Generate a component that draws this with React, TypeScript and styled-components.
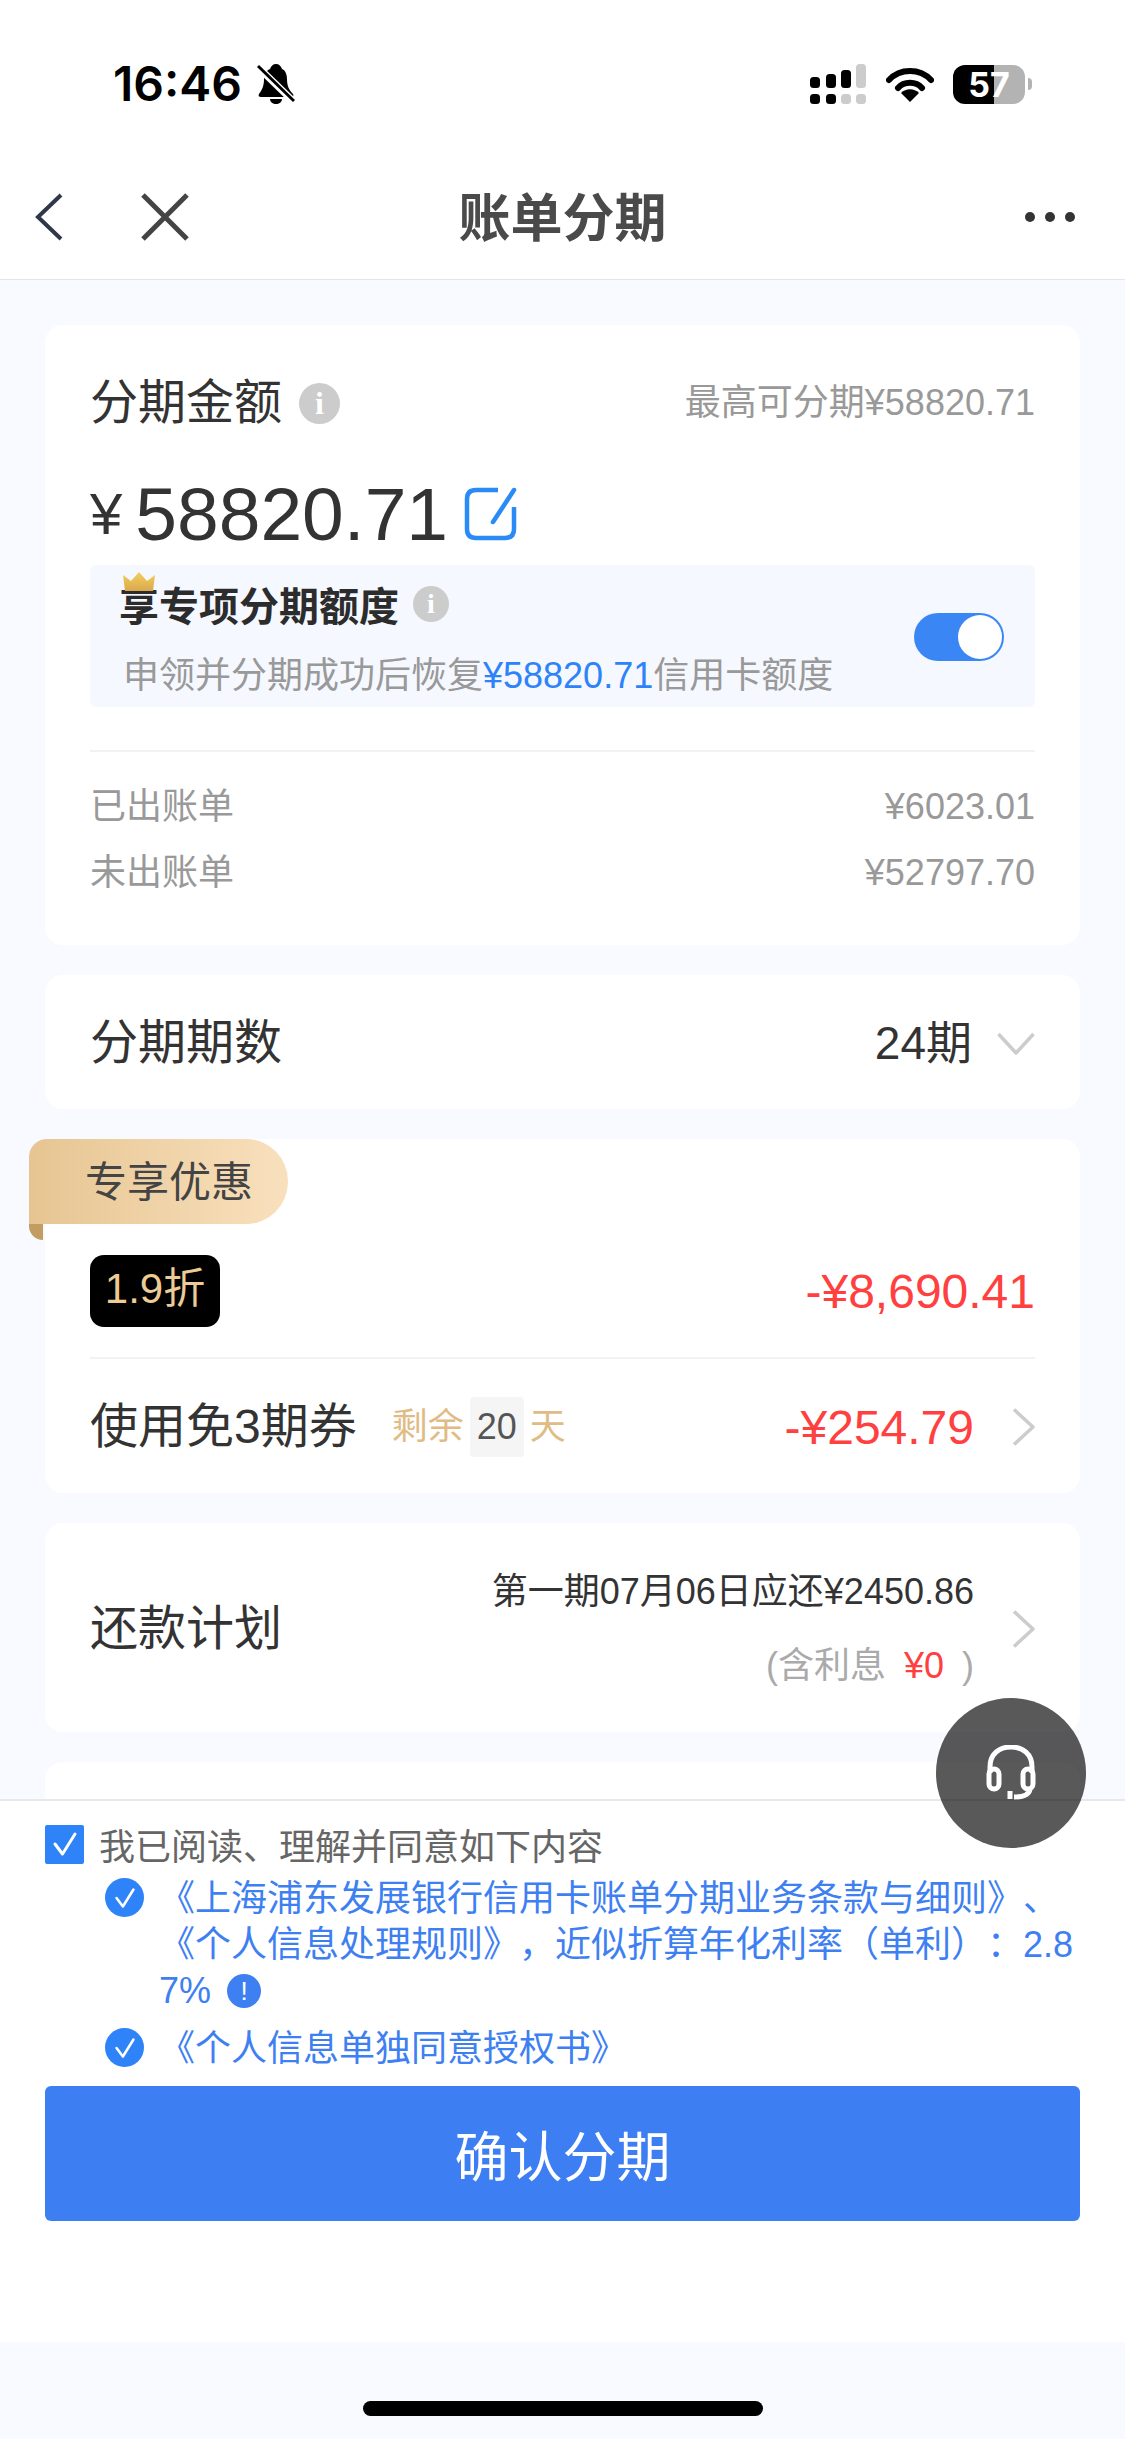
import React from "react";
import styled, { createGlobalStyle } from "styled-components";

const Global = createGlobalStyle`
  html, body { margin: 0; padding: 0; background: #f9faff; }
  * { box-sizing: border-box; }
  body {
    font-family: "Liberation Sans", "Noto Sans CJK SC", sans-serif;
    text-spacing-trim: space-all;
  }
`;

const Page = styled.div`
  position: relative;
  width: 1125px;
  height: 2439px;
  overflow: hidden;
  display: flex;
  flex-direction: column;
  background: #f9faff;
`;

const StatusBar = styled.div`
  height: 155px;
  flex: none;
  background: #fff;
  display: flex;
  justify-content: space-between;
  align-items: flex-start;
  padding: 60px 100px 0 113px;
`;
const StatusLeft = styled.div`
  display: flex;
  align-items: center;
  height: 48px;
  gap: 15px;
`;
const Time = styled.span`
  font-family: Inter, sans-serif;
  font-weight: 600;
  font-size: 48px;
  line-height: 48px;
  color: #000;
`;
const StatusRight = styled.div`
  display: flex;
  align-items: center;
  height: 48px;
  gap: 19px;
`;
const Battery = styled.div`
  position: relative;
  width: 72px;
  height: 39px;
  border-radius: 12px;
  background: linear-gradient(90deg, #000 57%, #b3b3b3 57%);
  color: #fff;
  font-family: Inter, sans-serif;
  font-weight: 700;
  font-size: 34px;
  line-height: 39px;
  text-align: center;
  &::after {
    content: "";
    position: absolute;
    right: -7px;
    top: 13px;
    width: 4px;
    height: 12px;
    border-radius: 0 4px 4px 0;
    background: #b3b3b3;
  }
`;

const Nav = styled.div`
  height: 125px;
  flex: none;
  background: #fff;
  border-bottom: 1px solid #e6e6e6;
  display: grid;
  grid-template-columns: 1fr auto 1fr;
  align-items: center;
  padding: 0 35px 1px;
`;
const NavLeft = styled.div`
  display: flex;
  align-items: center;
  gap: 78px;
`;
const NavRight = styled.div`
  display: flex;
  justify-content: flex-end;
  padding-right: 15px;
`;
const NavTitle = styled.div`
  font-size: 52px;
  font-weight: 700;
  color: #4a4a4a;
  line-height: 60px;
  padding-top: 4px;
`;

const Main = styled.div`
  flex: 1;
  min-height: 0;
  overflow: hidden;
  padding: 45px 45px 0;
  display: flex;
  flex-direction: column;
  gap: 30px;
`;

const Card = styled.section<{ $h: number; $pt?: number }>`
  position: relative;
  flex: none;
  background: #fff;
  border-radius: 18px;
  padding: ${(p) => p.$pt ?? 0}px 45px 0;
  height: ${(p) => p.$h}px;
`;

const Row = styled.div<{ $h: number; $mt?: number }>`
  display: flex;
  align-items: center;
  justify-content: space-between;
  height: ${(p) => p.$h}px;
  margin-top: ${(p) => p.$mt ?? 0}px;
`;
const Inline = styled.div<{ $gap?: number; $ml?: number }>`
  display: flex;
  align-items: center;
  gap: ${(p) => p.$gap ?? 0}px;
  margin-left: ${(p) => p.$ml ?? 0}px;
`;
const SectionTitle = styled.span`
  font-size: 48px;
  color: #333;
  line-height: 60px;
`;
const Muted = styled.span`
  font-size: 36px;
  color: #999;
  line-height: 44px;
`;
const InfoDot = styled.span<{ $s: number }>`
  display: inline-flex;
  align-items: center;
  justify-content: center;
  width: ${(p) => p.$s}px;
  height: ${(p) => p.$s}px;
  border-radius: 50%;
  background: #ccc;
  color: #fff;
  font-family: "Liberation Serif", serif;
  font-weight: 700;
  font-size: ${(p) => Math.round(p.$s * 0.78)}px;
  line-height: 1;
`;

const AmountRow = styled.div`
  display: flex;
  align-items: center;
  height: 90px;
  margin-top: 33px;
  color: #333;
`;
const Yen = styled.span`
  font-size: 58px;
  line-height: 90px;
  margin-right: 13px;
`;
const Amount = styled.span`
  font-size: 75px;
  line-height: 90px;
  margin-right: 16px;
`;

const Quota = styled.div`
  display: flex;
  align-items: center;
  justify-content: space-between;
  height: 142px;
  margin-top: 6px;
  padding: 0 31px 0 29px;
  background: #f5f8ff;
  border-radius: 6px;
`;
const QuotaText = styled.div`
  display: flex;
  flex-direction: column;
  align-self: flex-start;
  padding-top: 14px;
`;
const QuotaTitle = styled.div`
  position: relative;
  display: flex;
  align-items: center;
  gap: 14px;
  height: 50px;
  font-size: 40px;
  font-weight: 700;
  color: #2c2c2c;
`;
const Crown = styled.svg`
  position: absolute;
  left: 3px;
  top: -7px;
`;
const QuotaSub = styled.div`
  height: 50px;
  margin-top: 22px;
  padding-left: 4px;
  font-size: 36px;
  line-height: 50px;
  color: #999;
`;
const Blue = styled.span`
  color: #2e83f8;
`;
const Toggle = styled.div`
  width: 90px;
  height: 48px;
  margin-top: 2px;
  border-radius: 24px;
  background: #3a86f5;
  padding: 2px;
  display: flex;
  justify-content: flex-end;
`;
const Thumb = styled.div`
  width: 44px;
  height: 44px;
  border-radius: 50%;
  background: #fff;
`;
const Divider = styled.div<{ $mt?: number }>`
  height: 2px;
  background: #f2f2f2;
  margin-top: ${(p) => p.$mt ?? 0}px;
`;

const Value = styled.span`
  font-size: 46px;
  color: #333;
  line-height: 60px;
`;

const Tab = styled.div`
  position: absolute;
  left: -16px;
  top: 0;
  width: 259px;
  height: 85px;
  padding-left: 56px;
  border-radius: 18px 42px 42px 0;
  background: linear-gradient(90deg, #e6c592, #f9e0bd);
  font-size: 42px;
  line-height: 88px;
  color: #444;
  &::after {
    content: "";
    position: absolute;
    left: 0;
    top: 85px;
    width: 14px;
    height: 16px;
    border-radius: 0 0 0 14px;
    background: #c39c62;
  }
`;
const Discount = styled.div`
  width: 130px;
  height: 72px;
  border-radius: 14px;
  background: #000;
  color: #eccb94;
  font-size: 42px;
  line-height: 68px;
  text-align: center;
`;
const RedAmount = styled.span`
  font-size: 48px;
  line-height: 60px;
  padding-top: 2px;
  color: #ff4040;
`;
const Gold = styled.span`
  font-size: 36px;
  color: #dfbc85;
  line-height: 44px;
`;
const DayBox = styled.span`
  display: inline-flex;
  align-items: center;
  justify-content: center;
  width: 54px;
  height: 60px;
  border-radius: 4px;
  background: #f5f5f5;
  font-size: 36px;
  color: #555;
`;
const Plan = styled.div`
  display: flex;
  flex-direction: column;
  align-items: flex-end;
  gap: 32px;
  margin-top: -10px;
`;
const PlanLine = styled.span`
  font-size: 36px;
  line-height: 52px;
  color: #333;
`;
const PlanSub = styled.span`
  display: flex;
  gap: 18px;
  font-size: 36px;
  line-height: 32px;
  color: #aaa;
`;
const RedSmall = styled.span`
  color: #ff4040;
`;

const Footer = styled.div`
  flex: none;
  height: 543px;
  background: #fff;
  border-top: 2px solid #e8e8e8;
  padding: 21px 45px 0;
`;
const AgreeHead = styled.div`
  display: flex;
  align-items: center;
  gap: 15px;
  height: 44px;
  font-size: 36px;
  color: #666;
`;
const Square = styled.span`
  width: 39px;
  height: 39px;
  border-radius: 2px;
  background: #2e83f8;
  display: flex;
  align-items: center;
  justify-content: center;
`;
const AgreeItem = styled.div<{ $mt: number }>`
  display: flex;
  align-items: flex-start;
  gap: 15px;
  margin-top: ${(p) => p.$mt}px;
  padding-left: 60px;
`;
const Round = styled.span`
  flex: none;
  width: 39px;
  height: 39px;
  margin-top: 2px;
  border-radius: 50%;
  background: #2e83f8;
  display: flex;
  align-items: center;
  justify-content: center;
`;
const AgreeText = styled.div`
  width: 916px;
  font-size: 36px;
  line-height: 46px;
  color: #3e7ff2;
  word-break: break-all;
`;
const Alert = styled.span`
  display: inline-block;
  width: 34px;
  height: 34px;
  margin-left: 16px;
  border-radius: 50%;
  background: #3e7ff2;
  color: #fff;
  font-size: 26px;
  line-height: 34px;
  text-align: center;
  vertical-align: 3px;
`;
const Confirm = styled.button`
  display: block;
  width: 100%;
  height: 135px;
  margin-top: 14px;
  border: 0;
  border-radius: 6px;
  background: #3e7ef3;
  color: #fff;
  font-family: inherit;
  font-size: 54px;
`;
const HomeArea = styled.div`
  flex: none;
  height: 97px;
  display: flex;
  justify-content: center;
  padding-top: 59px;
`;
const HomeBar = styled.div`
  width: 400px;
  height: 15px;
  border-radius: 8px;
  background: #000;
`;
const Fab = styled.div`
  position: absolute;
  left: 936px;
  top: 1698px;
  width: 150px;
  height: 150px;
  border-radius: 50%;
  background: rgba(0, 0, 0, 0.65);
  display: flex;
  align-items: center;
  justify-content: center;
`;

const Check = ({ s = 26 }: { s?: number }) => (
  <svg width={s} height={s} viewBox="0 0 26 26" fill="none">
    <path d="M3 13 L10.5 23 L23 3" stroke="#fff" strokeWidth="3" strokeLinecap="round" strokeLinejoin="round" />
  </svg>
);
const ChevronRight = () => (
  <svg width="23" height="38" viewBox="0 0 23 38" fill="none">
    <path d="M2 1.5 L21 19 L2 36.5" stroke="#ccc" strokeWidth="3.5" strokeLinejoin="round" />
  </svg>
);

export default function App() {
  return (
    <Page>
      <Global />
      <StatusBar>
        <StatusLeft>
          <Time>16:46</Time>
          <svg width="38" height="42" viewBox="0 0 38 42">
            <path d="M19 1c3 0 5 2 6 5 3 1 5 5 5 10 0 7 2 11 6 15 1 2 0 3-2 3H4c-2 0-3-1-2-3 3-4 5-8 5-15 0-5 3-9 6-10 1-3 3-5 6-5z" fill="#000" />
            <path d="M13 36h12c0 3-3 5-6 5s-6-2-6-5z" fill="#000" />
            <path d="M1 4 L37 39" stroke="#fff" strokeWidth="7" />
            <path d="M1 3 L37 38" stroke="#000" strokeWidth="3" />
          </svg>
        </StatusLeft>
        <StatusRight>
          <svg width="57" height="41" viewBox="0 0 57 41">
            <rect x="0" y="13" width="10" height="11" rx="3.5" fill="#000" />
            <rect x="16" y="10" width="10" height="14" rx="3.5" fill="#000" />
            <rect x="31" y="6" width="10" height="18" rx="3.5" fill="#000" />
            <rect x="46" y="0" width="10" height="24" rx="3.5" fill="#ccc" />
            <rect x="0" y="30" width="10" height="10" rx="3.5" fill="#000" />
            <rect x="16" y="30" width="10" height="10" rx="3.5" fill="#000" />
            <rect x="31" y="30" width="10" height="10" rx="3.5" fill="#ccc" />
            <rect x="46" y="30" width="10" height="10" rx="3.5" fill="#ccc" />
          </svg>
          <svg width="48" height="37" viewBox="0 0 48 37" fill="none">
            <path d="M3 14 C14 2 34 2 45 14" stroke="#000" strokeWidth="6" strokeLinecap="round" />
            <path d="M12 22 C18 15 30 15 36 22" stroke="#000" strokeWidth="6" strokeLinecap="round" />
            <path d="M15 27 C20 22 28 22 33 27 L24 36 Z" fill="#000" />
          </svg>
          <Battery>57</Battery>
        </StatusRight>
      </StatusBar>

      <Nav>
        <NavLeft>
          <svg width="28" height="48" viewBox="0 0 28 48" fill="none">
            <path d="M26 2 L3 24 L26 46" stroke="#2f3848" strokeWidth="4" />
          </svg>
          <svg width="48" height="48" viewBox="0 0 48 48" fill="none">
            <path d="M2 2 L46 46 M46 2 L2 46" stroke="#444" strokeWidth="5" />
          </svg>
        </NavLeft>
        <NavTitle>账单分期</NavTitle>
        <NavRight>
          <svg width="50" height="12" viewBox="0 0 50 12">
            <circle cx="5" cy="6" r="5" fill="#333" />
            <circle cx="25" cy="6" r="5" fill="#333" />
            <circle cx="45" cy="6" r="5" fill="#333" />
          </svg>
        </NavRight>
      </Nav>

      <Main>
        <Card $h={620} $pt={45}>
          <Row $h={66}>
            <Inline $gap={17}>
              <SectionTitle>分期金额</SectionTitle>
              <InfoDot $s={41}>i</InfoDot>
            </Inline>
            <Muted>最高可分期¥58820.71</Muted>
          </Row>
          <AmountRow>
            <Yen>¥</Yen>
            <Amount>58820.71</Amount>
            <svg width="53" height="54" viewBox="0 0 53 54" fill="none">
              <path d="M34 3 H12 C6 3 3 6 3 12 V42 C3 48 6 51 12 51 H41 C47 51 50 48 50 42 V20" stroke="#2a8af6" strokeWidth="4.5" />
              <path d="M50 3 L29 35" stroke="#2a8af6" strokeWidth="4.5" strokeLinecap="round" />
            </svg>
          </AmountRow>
          <Quota>
            <QuotaText>
              <QuotaTitle>
                <Crown width="34" height="19" viewBox="0 0 34 19">
                  <defs>
                    <linearGradient id="crown" x1="0" y1="0" x2="0" y2="1">
                      <stop offset="0" stopColor="#f4cf5e" />
                      <stop offset="1" stopColor="#d9a94c" />
                    </linearGradient>
                  </defs>
                  <path d="M1 3 L9 9 L17 0 L25 9 L33 3 L31 19 H3 Z" fill="url(#crown)" />
                </Crown>
                <span>享专项分期额度</span>
                <InfoDot $s={36}>i</InfoDot>
              </QuotaTitle>
              <QuotaSub>
                申领并分期成功后恢复<Blue>¥58820.71</Blue>信用卡额度
              </QuotaSub>
            </QuotaText>
            <Toggle>
              <Thumb />
            </Toggle>
          </Quota>
          <Divider $mt={43} />
          <Row $h={66} $mt={22}>
            <Muted>已出账单</Muted>
            <Muted>¥6023.01</Muted>
          </Row>
          <Row $h={66}>
            <Muted>未出账单</Muted>
            <Muted>¥52797.70</Muted>
          </Row>
        </Card>

        <Card $h={134} $pt={1}>
          <Row $h={134}>
            <SectionTitle>分期期数</SectionTitle>
            <Inline $gap={25}>
              <Value>24期</Value>
              <svg width="38" height="23" viewBox="0 0 38 23" fill="none">
                <path d="M1.5 2 L19 21 L36.5 2" stroke="#ccc" strokeWidth="3.5" strokeLinejoin="round" />
              </svg>
            </Inline>
          </Row>
        </Card>

        <Card $h={354} $pt={116}>
          <Tab>专享优惠</Tab>
          <Row $h={72}>
            <Discount>1.9折</Discount>
            <RedAmount>-¥8,690.41</RedAmount>
          </Row>
          <Divider $mt={30} />
          <Row $h={136}>
            <Inline>
              <SectionTitle>使用免3期券</SectionTitle>
              <Inline $gap={6} $ml={35}>
                <Gold>剩余</Gold>
                <DayBox>20</DayBox>
                <Gold>天</Gold>
              </Inline>
            </Inline>
            <Inline $gap={38}>
              <RedAmount>-¥254.79</RedAmount>
              <ChevronRight />
            </Inline>
          </Row>
        </Card>

        <Card $h={209} $pt={1}>
          <Row $h={209}>
            <SectionTitle>还款计划</SectionTitle>
            <Inline $gap={38}>
              <Plan>
                <PlanLine>第一期07月06日应还¥2450.86</PlanLine>
                <PlanSub>
                  <span>(含利息</span>
                  <RedSmall>¥0</RedSmall>
                  <span>)</span>
                </PlanSub>
              </Plan>
              <ChevronRight />
            </Inline>
          </Row>
        </Card>

        <Card $h={120} />
      </Main>

      <Footer>
        <AgreeHead>
          <Square>
            <Check />
          </Square>
          我已阅读、理解并同意如下内容
        </AgreeHead>
        <AgreeItem $mt={10}>
          <Round>
            <Check s={22} />
          </Round>
          <AgreeText>
            《上海浦东发展银行信用卡账单分期业务条款与细则》、《个人信息处理规则》，近似折算年化利率（单利）：2.87%
            <Alert>!</Alert>
          </AgreeText>
        </AgreeItem>
        <AgreeItem $mt={12}>
          <Round>
            <Check s={22} />
          </Round>
          <AgreeText>《个人信息单独同意授权书》</AgreeText>
        </AgreeItem>
        <Confirm>确认分期</Confirm>
      </Footer>
      <HomeArea>
        <HomeBar />
      </HomeArea>

      <Fab>
        <svg width="50" height="56" viewBox="0 0 50 56" fill="none" stroke="#fff" strokeWidth="5">
          <path d="M4 28 V22 C4 9 13 2 25 2 C37 2 46 9 46 22 V28" />
          <rect x="3" y="24" width="10" height="20" rx="5" />
          <rect x="37" y="24" width="10" height="20" rx="5" />
          <path d="M44 44 C43 50 38 52 28 52 M24 46 V54" />
        </svg>
      </Fab>
    </Page>
  );
}
